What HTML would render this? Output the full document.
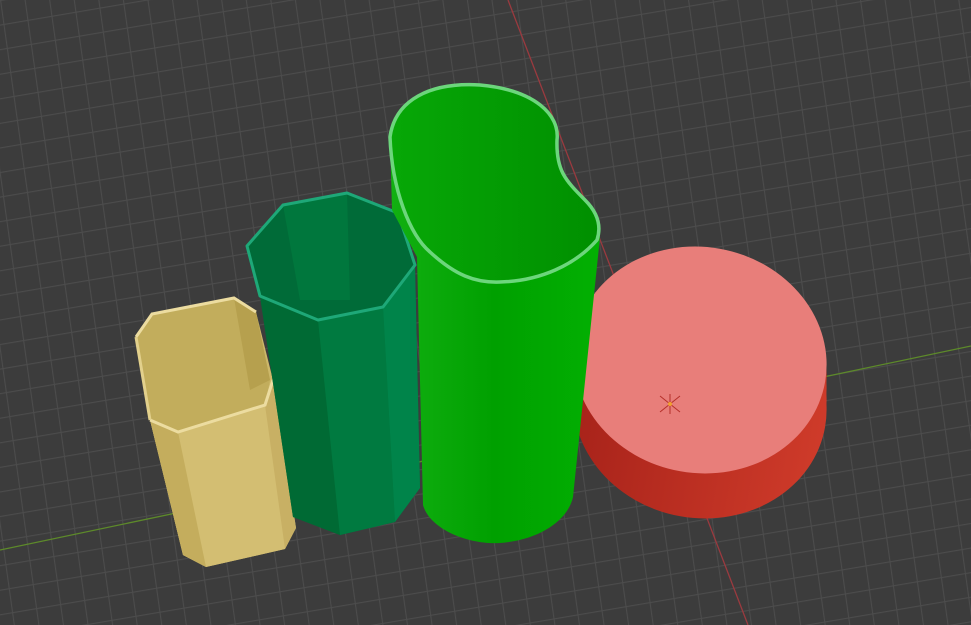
<!DOCTYPE html>
<html><head><meta charset="utf-8"><style>
html,body{margin:0;padding:0;background:#3d3d3d;overflow:hidden}
svg{display:block}
</style></head><body>
<svg width="971" height="625" viewBox="0 0 971 625" xmlns="http://www.w3.org/2000/svg">
<defs>
<pattern id="g" width="24" height="24" patternUnits="userSpaceOnUse" patternTransform="matrix(1,-0.17,0.14,1,0,0)">
<rect width="24" height="24" fill="#3c3c3c"/>
<path d="M0 0.5H24M0.5 0V24" stroke="#4c4c4c" stroke-width="1.1"/>
</pattern>
<linearGradient id="tube" x1="0" x2="1"><stop offset="0" stop-color="#12b012"/><stop offset="0.5" stop-color="#00a000"/><stop offset="1" stop-color="#02b002"/></linearGradient>
<linearGradient id="tin" x1="0" x2="1"><stop offset="0" stop-color="#07a807"/><stop offset="1" stop-color="#008f00"/></linearGradient>
<linearGradient id="rside" gradientUnits="userSpaceOnUse" x1="580" y1="0" x2="830" y2="0"><stop offset="0" stop-color="#a8231a"/><stop offset="1" stop-color="#cf3b2a"/></linearGradient>
</defs>
<rect width="971" height="625" fill="url(#g)"/>
<line x1="0" y1="550" x2="971" y2="346" stroke="#5d8a2a" stroke-width="1.3"/>
<line x1="508" y1="0" x2="748" y2="625" stroke="#9a3a3f" stroke-width="1.3"/>

<!-- red cylinder -->
<g fill="url(#rside)">
<ellipse cx="700" cy="372" rx="127" ry="113" transform="rotate(10 700 372)"/>
<ellipse cx="700" cy="384" rx="127" ry="113" transform="rotate(10 700 384)"/>
<ellipse cx="700" cy="396" rx="127" ry="113" transform="rotate(10 700 396)"/>
<ellipse cx="700" cy="405" rx="127" ry="113" transform="rotate(10 700 405)"/>
</g>
<ellipse cx="700" cy="360" rx="127" ry="113" transform="rotate(10 700 360)" fill="#e87e7a"/>
<g stroke="#b5302a" stroke-width="1"><line x1="660" y1="396" x2="680" y2="412"/><line x1="680" y1="396" x2="660" y2="412"/><line x1="670" y1="394" x2="670" y2="414"/></g>
<circle cx="670" cy="404" r="2" fill="#f0a030"/>

<!-- yellow prism -->
<polygon points="136,337 150,420 183,555 206,567 285,549 296,528 273,380 256,312 234,298 152,314" fill="#cdb86a"/>
<polygon points="152,314 234,298 256,312 270,380 265,405 178,432 150,420 136,337" fill="#c2ad5c"/>
<polygon points="234,298 256,312 270,380 250,390" fill="#b6a04e"/>
<polygon points="150,420 178,432 265,405 273,380 285,549 206,567 183,555" fill="#d3be72"/>
<polygon points="150,420 178,432 206,567 183,555" fill="#c4ad5d"/>
<polygon points="265,405 273,380 296,528 285,549" fill="#c8b064"/>
<polyline points="136,337 152,314 234,298 256,312" fill="none" stroke="#ecdca0" stroke-width="3"/>
<polyline points="150,420 178,432 265,405 273,380" fill="none" stroke="#ecdca0" stroke-width="3"/>
<polyline points="136,337 150,420" fill="none" stroke="#e2d08c" stroke-width="3"/>

<!-- green octagon -->
<polygon points="247,246 283,205 347,193 398,213 415,265 420,488 395,522 340,535 293,517 260,296" fill="#00703a"/>
<polygon points="247,246 283,205 347,193 398,213 415,265 383,307 318,320 260,296" fill="#006b38"/>
<polygon points="283,205 347,193 350,300 300,300" fill="#00773d"/>
<polygon points="260,296 318,320 340,535 293,517" fill="#006a34"/>
<polygon points="318,320 383,307 395,522 340,535" fill="#007a40"/>
<polygon points="383,307 415,265 420,488 395,522" fill="#00844a"/>
<polygon points="247,246 283,205 347,193 398,213 415,265 383,307 318,320 260,296" fill="none" stroke="#1ea878" stroke-width="3" stroke-linejoin="round"/>

<!-- green tube -->
<path d="M390,137 L392,210 L417,257 L423,505 C430,530 470,545 500,543 C540,540 568,520 573,497 L600,237 C600,220 595,212 585,200 C565,180 558,170 558,140 C560,115 535,90 480,85 C430,82 395,100 390,137 Z" fill="url(#tube)"/>
<path d="M390,137 C392,190 410,235 430,252 C455,275 475,283 500,282 C540,281 575,265 597,240 C602,225 595,212 585,200 C565,180 558,170 558,140 C560,115 535,90 480,85 C430,82 395,100 390,137 Z" fill="url(#tin)"/>
<path d="M390,137 C392,190 410,235 430,252 C455,275 475,283 500,282 C540,281 575,265 597,240 C602,225 597,212 585,200 C565,180 556,170 557,140 C560,115 535,90 480,85 C430,82 395,100 390,137 Z" fill="none" stroke="#6cd67c" stroke-width="3.5"/>
</svg>
</body></html>
